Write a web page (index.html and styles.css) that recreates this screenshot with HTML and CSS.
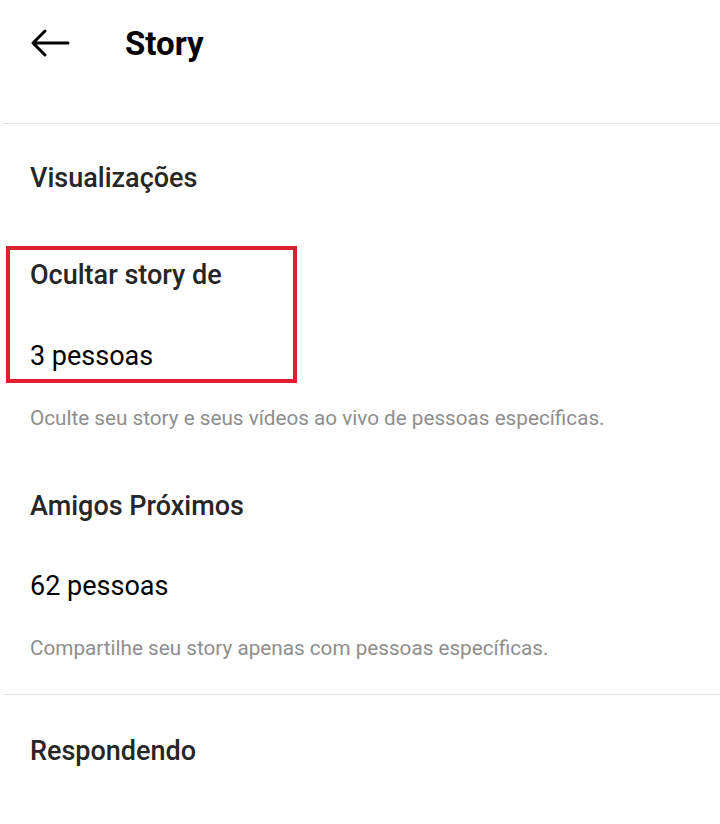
FILE: index.html
```html
<!DOCTYPE html>
<html lang="pt-BR">
<head>
<meta charset="utf-8">
<link rel="stylesheet" href="styles.css">
</head>
<body>
<header class="topbar">
  <svg class="back" width="40" height="30" viewBox="0 0 40 30">
    <path d="M38 15H3M15 3L3 15l12 12" fill="none" stroke="#000" stroke-width="3" stroke-linecap="round" stroke-linejoin="round"/>
  </svg>
  <h1 class="title">Story</h1>
</header>
<div class="divider"></div>
<section class="section">
  <div class="row heading first">Visualizações</div>
  <div class="highlight">
    <div class="row heading">Ocultar story de</div>
    <div class="row value">3 pessoas</div>
  </div>
  <div class="hint">Oculte seu story e seus vídeos ao vivo de pessoas específicas.</div>
  <div class="row heading amigos">Amigos Próximos</div>
  <div class="row value v2">62 pessoas</div>
  <div class="hint h2">Compartilhe seu story apenas com pessoas específicas.</div>
</section>
<div class="divider d2"></div>
<section class="section">
  <div class="row heading resp">Respondendo</div>
</section>
</body>
</html>
```

FILE: styles.css
```css
* { box-sizing: border-box; }
html, body { margin: 0; padding: 0; background: #fff; }
body {
  width: 720px;
  height: 824px;
  overflow: hidden;
  font-family: Roboto, "Noto Sans", "Liberation Sans", sans-serif;
  color: #262626;
}
.topbar {
  display: flex;
  align-items: center;
  height: 86px;
  padding-left: 30px;
}
.back { display: block; flex: none; }
.title {
  margin: 0 0 0 55px;
  font-size: 33px;
  font-weight: 700;
  color: #000;
  line-height: 1;
}
.divider {
  margin: 37px 0 0 3px;
  height: 1px;
  background: #e3e3e3;
}
.d2 { margin-top: 34px; }
.section { padding: 0 0 0 30px; }
.row { line-height: 32px; }
.heading { font-size: 27px; font-weight: 500; color: #262626; }
.first { margin-top: 38px; }
.highlight {
  margin: 52px 0 0 -24px;
  width: 291px;
  height: 137px;
  border: 4px solid #e0202e;
  padding: 9px 0 0 20px;
}
.value { font-size: 27px; font-weight: 400; color: #000; }
.highlight .value { margin-top: 49px; }
.hint {
  margin-top: 23px;
  font-size: 20.7px;
  color: #8e8e8e;
  line-height: 24px;
}
.amigos { margin-top: 60px; }
.v2 { margin-top: 48px; }
.h2 { margin-top: 34px; }
.resp { margin-top: 40px; }
```
